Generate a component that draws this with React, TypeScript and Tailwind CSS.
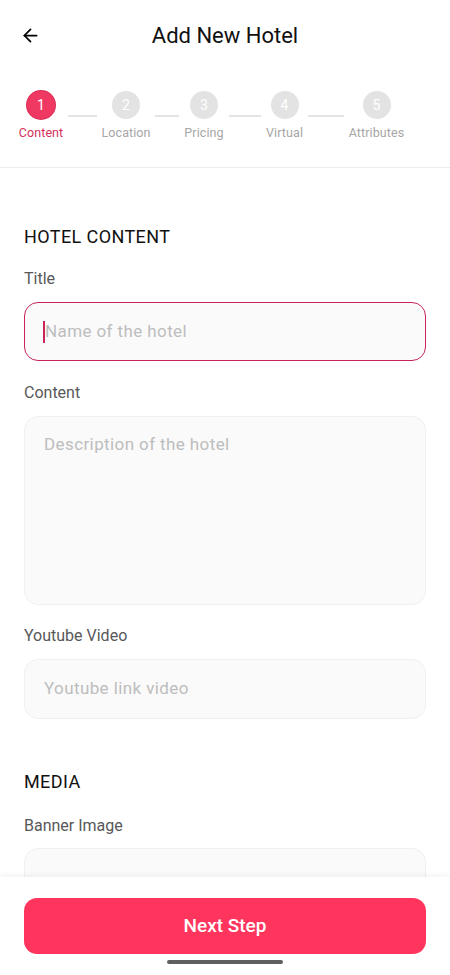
import { ArrowLeft } from "lucide-react";

const steps = [
  { n: 1, label: "Content", w: "w-[44px]" },
  { n: 2, label: "Location", w: "w-[48px]" },
  { n: 3, label: "Pricing", w: "w-[40px]" },
  { n: 4, label: "Virtual", w: "w-[37px]" },
  { n: 5, label: "Attributes", w: "w-[55px]" },
];

const lines = ["w-[29px]", "w-[24px]", "w-[32px]", "w-[36px]"];

function Stepper() {
  return (
    <div className="flex items-start pl-[19px] pt-[21px] pb-[26px]">
      {steps.map((s, i) => {
        const active = i === 0;
        return (
          <div key={s.n} className="flex items-start">
            <div className={`flex flex-col items-center ${s.w}`}>
              <div
                className={`flex size-[28px] items-center justify-center rounded-full text-[14px] text-white ${
                  active ? "bg-[#ef3962] ring-1 ring-[#d92d55]" : "bg-[#e3e3e3]"
                }`}
              >
                {s.n}
              </div>
              <span
                className={`mt-[6px] whitespace-nowrap text-[12.5px] leading-[16px] tracking-[0.1px] ${
                  active ? "text-[#d3305a]" : "text-[#a6a6a6]"
                }`}
              >
                {s.label}
              </span>
            </div>
            {i < lines.length && (
              <div className={`mx-[5px] mt-[24px] h-[2px] bg-[#e3e3e3] ${lines[i]}`} />
            )}
          </div>
        );
      })}
    </div>
  );
}

function Label({ children, className = "" }: { children: React.ReactNode; className?: string }) {
  return <div className={`text-[16px] leading-[18px] text-[#585858] ${className}`}>{children}</div>;
}

export default function App() {
  return (
    <div
      className="flex h-[975px] w-full flex-col overflow-hidden bg-white"
      style={{ fontFamily: "Roboto, 'Noto Sans', sans-serif" }}
    >
      <header className="flex h-[70px] items-center px-[20px]">
        <ArrowLeft className="size-[21px] text-black" strokeWidth={2} />
        <h1 className="flex-1 pr-[21px] text-center text-[22px] font-normal text-[#111111]">
          Add New Hotel
        </h1>
      </header>

      <Stepper />
      <div className="h-[1px] bg-[#ececec]" />

      <main className="flex-1 overflow-hidden px-[24px] pt-[59px]">
        <h2 className="text-[18px] leading-[20px] font-normal tracking-[0.4px] text-[#111111]">
          HOTEL CONTENT
        </h2>

        <Label className="mt-[23px]">Title</Label>
        <div className="mt-[14px] flex h-[59px] items-center rounded-[14px] border border-[#c8245a] bg-[#fafafa] px-[18px]">
          <span className="h-[22px] w-[2px] bg-[#c8245a]" />
          <span className="text-[17px] tracking-[0.4px] text-[#bdbdbd]">Name of the hotel</span>
        </div>

        <Label className="mt-[23px]">Content</Label>
        <div className="mt-[14px] h-[189px] rounded-[14px] border border-[#f0f0f0] bg-[#fafafa] px-[19px] pt-[15px]">
          <span className="text-[17px] tracking-[0.4px] text-[#bdbdbd]">Description of the hotel</span>
        </div>

        <Label className="mt-[22px]">Youtube Video</Label>
        <div className="mt-[14px] flex h-[60px] items-center rounded-[14px] border border-[#f0f0f0] bg-[#fafafa] px-[19px]">
          <span className="text-[17px] tracking-[0.4px] text-[#bdbdbd]">Youtube link video</span>
        </div>

        <h2 className="mt-[53px] text-[18px] leading-[20px] font-normal tracking-[0.4px] text-[#111111]">
          MEDIA
        </h2>

        <Label className="mt-[25px]">Banner Image</Label>
        <div className="mt-[13px] h-[120px] rounded-[14px] border border-[#f0f0f0] bg-[#fafafa]" />
      </main>

      <footer className="flex h-[98px] flex-col items-center bg-white px-[24px] pt-[21px] shadow-[0_-2px_6px_rgba(0,0,0,0.05)]">
        <button className="h-[56px] w-full rounded-[13px] bg-[#ff355e] text-[19px] font-medium text-white">
          Next Step
        </button>
        <div className="mt-[6px] h-[4px] w-[116px] rounded-full bg-[#5f5f5f]" />
      </footer>
    </div>
  );
}
